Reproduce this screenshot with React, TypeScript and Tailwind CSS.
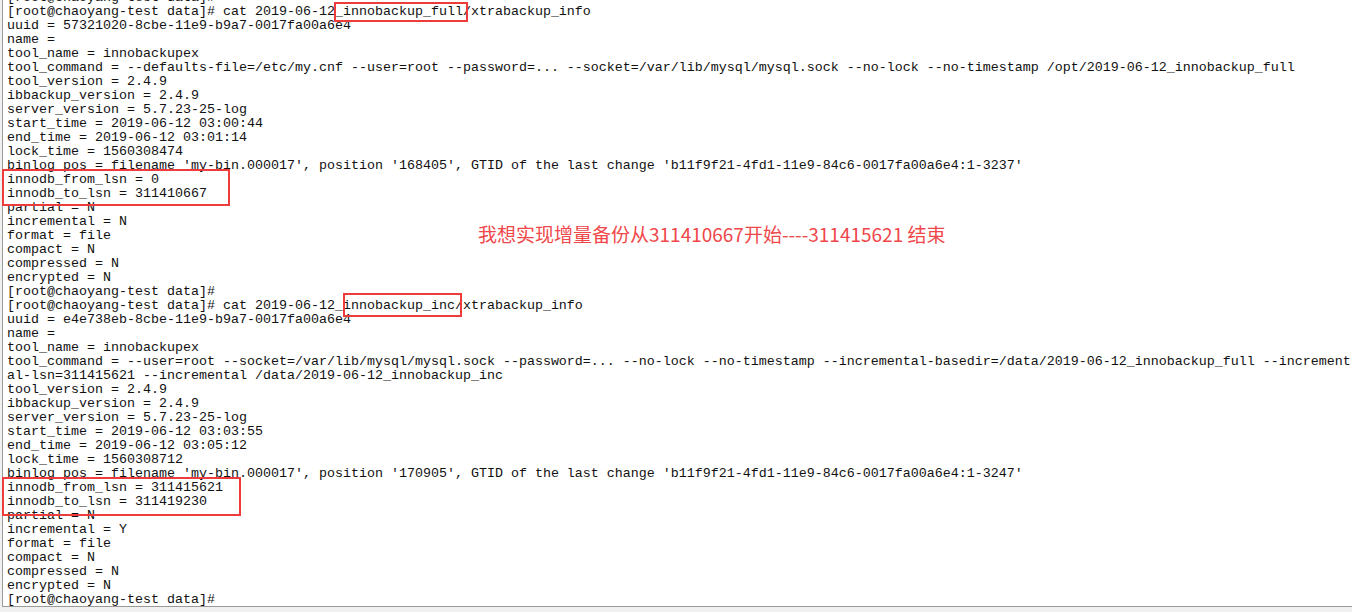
import React from 'react';

const lines: string[] = [
  '[root@chaoyang-test data]#',
  '[root@chaoyang-test data]# cat 2019-06-12_innobackup_full/xtrabackup_info',
  'uuid = 57321020-8cbe-11e9-b9a7-0017fa00a6e4',
  'name = ',
  'tool_name = innobackupex',
  'tool_command = --defaults-file=/etc/my.cnf --user=root --password=... --socket=/var/lib/mysql/mysql.sock --no-lock --no-timestamp /opt/2019-06-12_innobackup_full',
  'tool_version = 2.4.9',
  'ibbackup_version = 2.4.9',
  'server_version = 5.7.23-25-log',
  'start_time = 2019-06-12 03:00:44',
  'end_time = 2019-06-12 03:01:14',
  'lock_time = 1560308474',
  "binlog_pos = filename 'my-bin.000017', position '168405', GTID of the last change 'b11f9f21-4fd1-11e9-84c6-0017fa00a6e4:1-3237'",
  'innodb_from_lsn = 0',
  'innodb_to_lsn = 311410667',
  'partial = N',
  'incremental = N',
  'format = file',
  'compact = N',
  'compressed = N',
  'encrypted = N',
  '[root@chaoyang-test data]#',
  '[root@chaoyang-test data]# cat 2019-06-12_innobackup_inc/xtrabackup_info',
  'uuid = e4e738eb-8cbe-11e9-b9a7-0017fa00a6e4',
  'name = ',
  'tool_name = innobackupex',
  'tool_command = --user=root --socket=/var/lib/mysql/mysql.sock --password=... --no-lock --no-timestamp --incremental-basedir=/data/2019-06-12_innobackup_full --increment',
  'al-lsn=311415621 --incremental /data/2019-06-12_innobackup_inc',
  'tool_version = 2.4.9',
  'ibbackup_version = 2.4.9',
  'server_version = 5.7.23-25-log',
  'start_time = 2019-06-12 03:03:55',
  'end_time = 2019-06-12 03:05:12',
  'lock_time = 1560308712',
  "binlog_pos = filename 'my-bin.000017', position '170905', GTID of the last change 'b11f9f21-4fd1-11e9-84c6-0017fa00a6e4:1-3247'",
  'innodb_from_lsn = 311415621',
  'innodb_to_lsn = 311419230',
  'partial = N',
  'incremental = Y',
  'format = file',
  'compact = N',
  'compressed = N',
  'encrypted = N',
  '[root@chaoyang-test data]#',
];

const App = () => {
  return (
    <div className="relative w-[1352px] h-[612px] overflow-hidden bg-[#f0f0f0]">
      <div className="h-[607px] ml-[2px] border-l border-b border-[#9a9a9a] bg-white overflow-hidden">
        <div className="-mt-[9px] pl-[4px] font-['Liberation_Mono',monospace] text-[13.33px] leading-[14px] text-[#111]">
          {lines.map((line, i) => (
            <div key={i} className="h-[14px] whitespace-pre">{line}</div>
          ))}
        </div>
      </div>

      {/* red annotation boxes */}
      <div className="absolute left-[334px] top-[2px] w-[134px] h-[20px] border-2 border-[#ee3b3b]" />
      <div className="absolute left-[2px] top-[169px] w-[228px] h-[37px] border-2 border-[#ee3b3b]" />
      <div className="absolute left-[343px] top-[293px] w-[119px] h-[24px] border-2 border-[#ee3b3b]" />
      <div className="absolute left-[2px] top-[477px] w-[239px] h-[39px] border-2 border-[#ee3b3b]" />

      <div className="absolute left-[478px] top-[222px] whitespace-pre font-['Noto_Sans_CJK_SC',sans-serif] text-[19px] leading-[24px] text-[#f0474a]">
        我想实现增量备份从311410667开始----311415621 结束
      </div>
    </div>
  );
};

export default App;
